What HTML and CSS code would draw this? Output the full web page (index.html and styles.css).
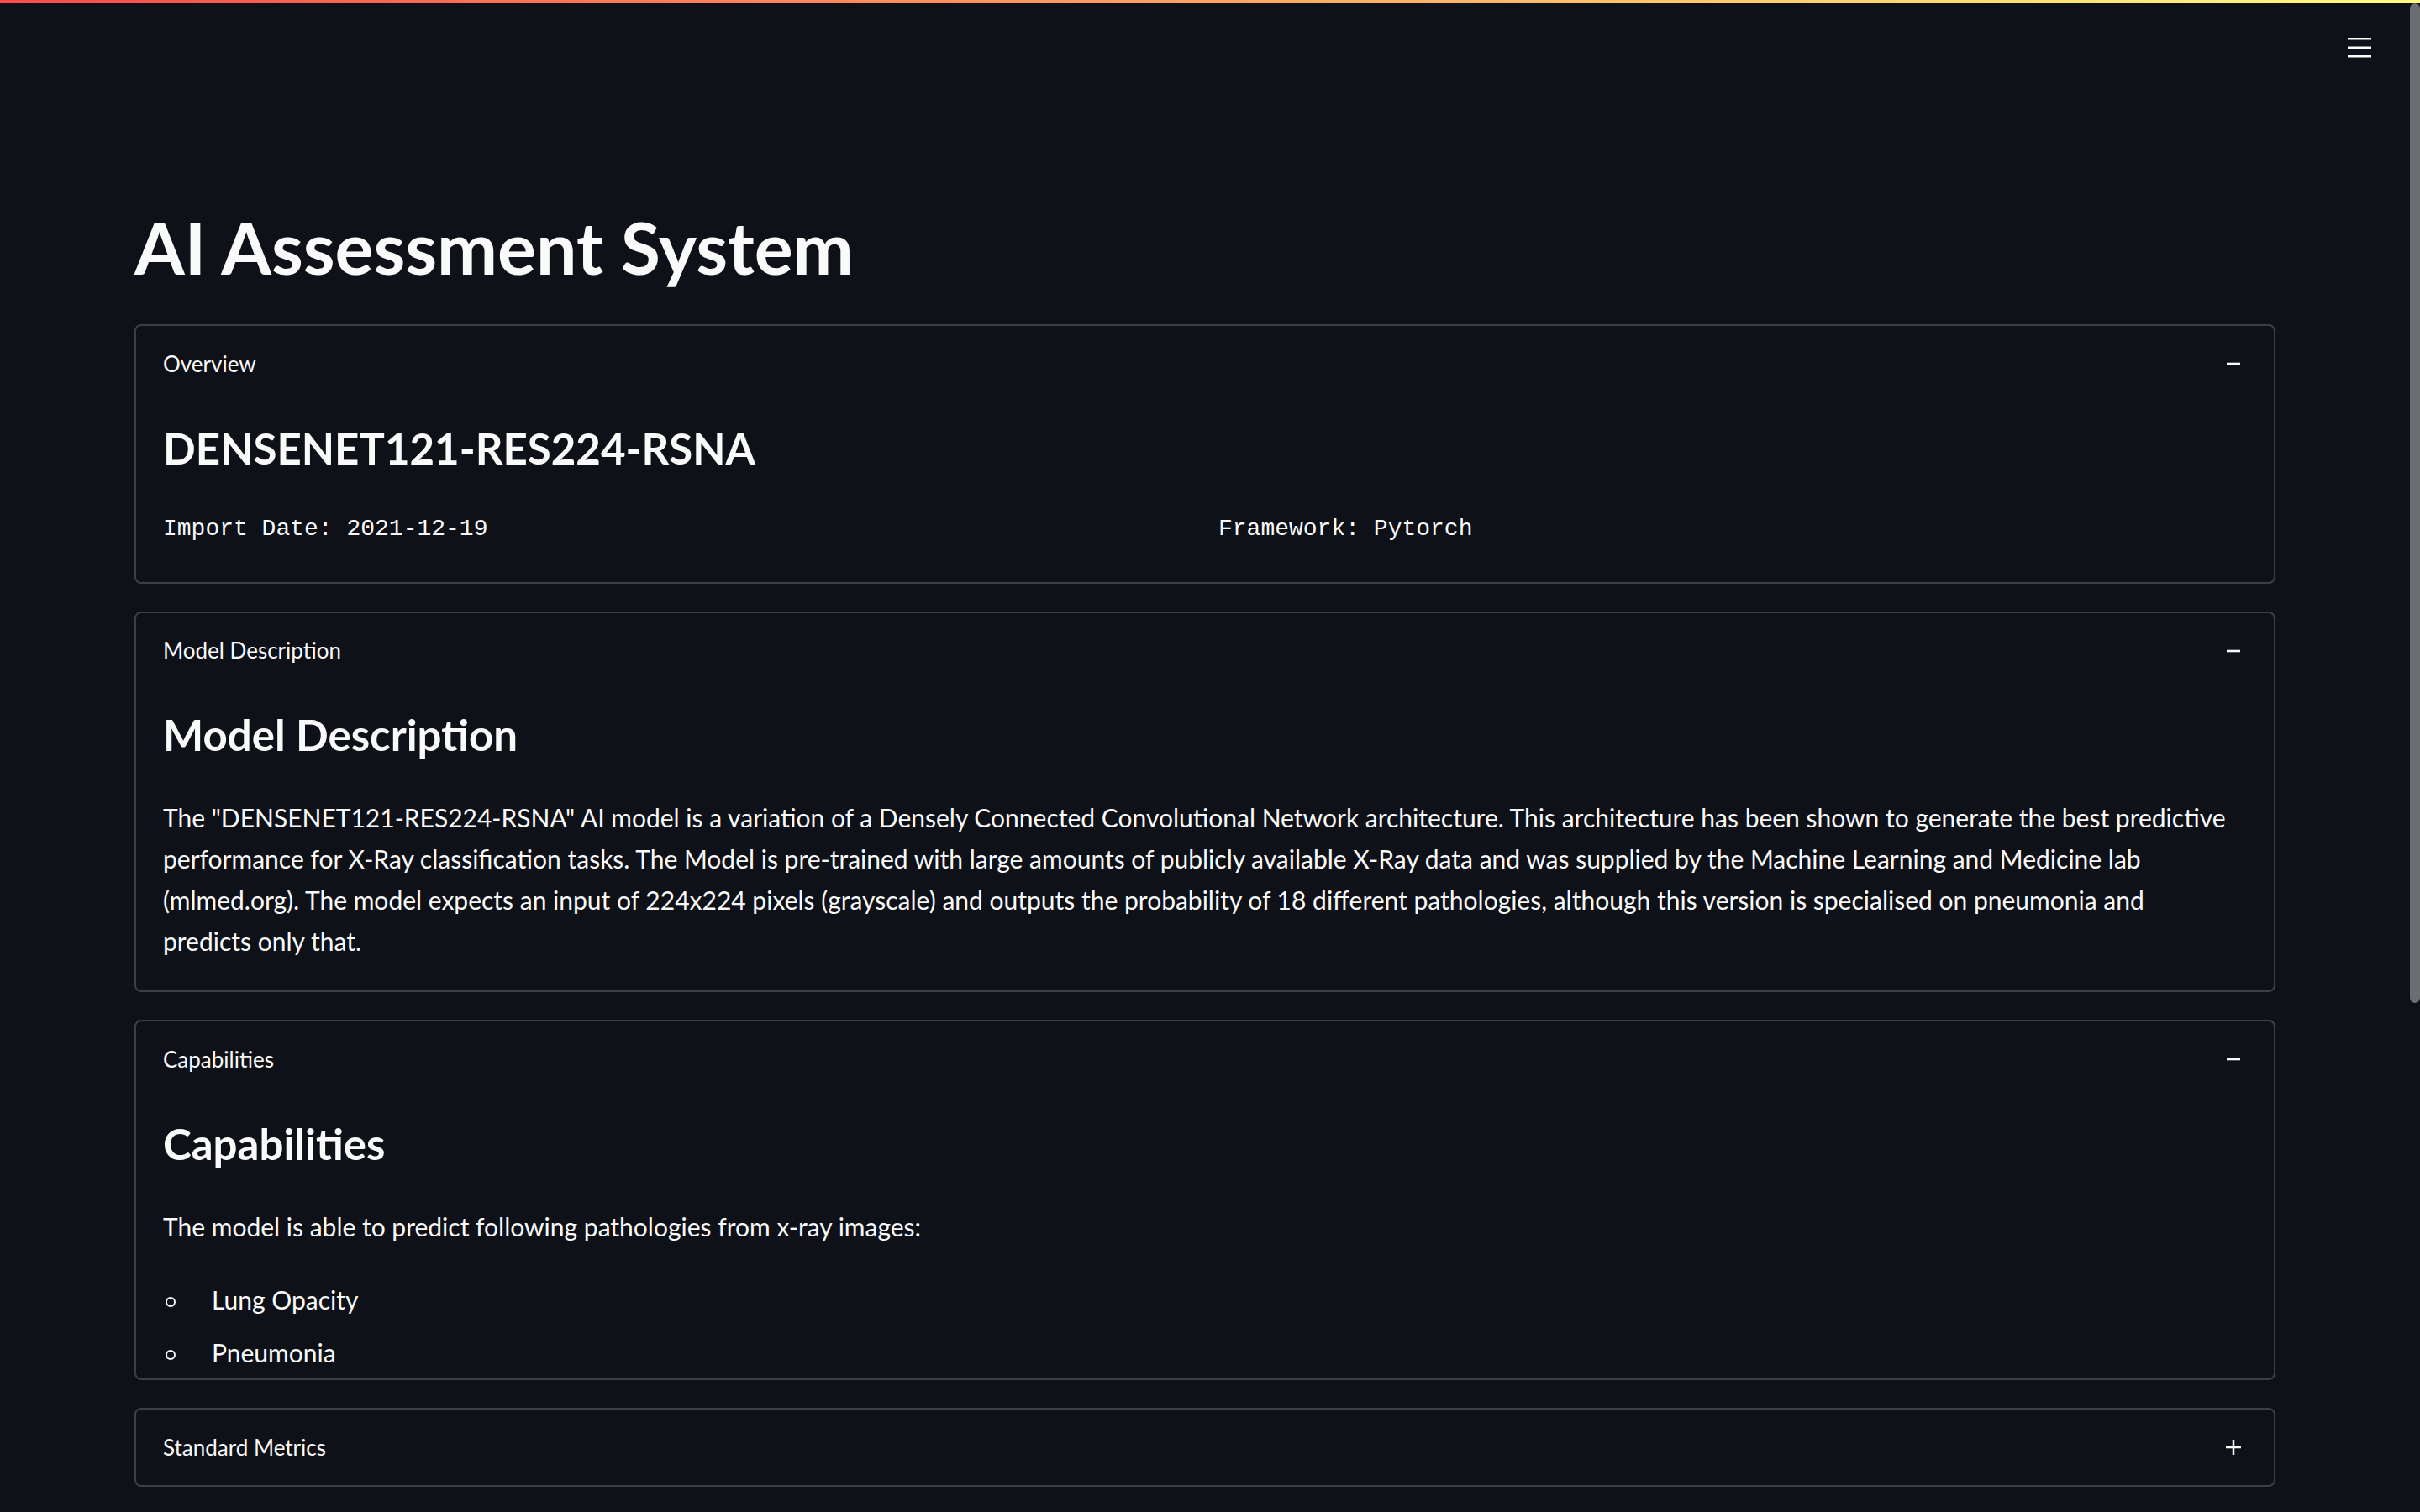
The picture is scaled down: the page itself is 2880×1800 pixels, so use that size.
FILE: index.html
```html
<!DOCTYPE html>
<html lang="en">
<head>
<meta charset="utf-8">
<title>AI Assessment System</title>
<link rel="stylesheet" href="styles.css">
</head>
<body>
<div class="decoration"></div>
<header class="topbar">
  <button class="menu-btn" aria-label="Menu">
    <svg width="28" height="26" viewBox="0 0 28 26"><rect x="0" y="2" width="28" height="2.5" fill="#fafafa"/><rect x="0" y="12.5" width="28" height="2.5" fill="#fafafa"/><rect x="0" y="23" width="28" height="2.5" fill="#fafafa"/></svg>
  </button>
</header>
<div class="app">
  <main class="main">
    <h1 class="title">AI Assessment System</h1>
    <div class="stack">
      <section class="expander">
        <div class="exp-head"><span>Overview</span>
          <svg class="icon" viewBox="0 0 24 24" width="24" height="24"><rect x="4" y="10.7" width="16" height="2.6" fill="#fafafa"/></svg>
        </div>
        <div class="exp-body overview">
          <h3 class="h3">DENSENET121-RES224-RSNA</h3>
          <div class="cols">
            <div class="mono">Import Date: 2021-12-19</div>
            <div class="mono">Framework: Pytorch</div>
          </div>
        </div>
      </section>
      <section class="expander">
        <div class="exp-head"><span>Model Description</span>
          <svg class="icon" viewBox="0 0 24 24" width="24" height="24"><rect x="4" y="10.7" width="16" height="2.6" fill="#fafafa"/></svg>
        </div>
        <div class="exp-body description">
          <h3 class="h3">Model Description</h3>
          <p class="para desc-para">The "DENSENET121-RES224-RSNA" AI model is a variation of a Densely Connected Convolutional Network architecture. This architecture has been shown to generate the best predictive performance for X-Ray classification tasks. The Model is pre-trained with large amounts of publicly available X-Ray data and was supplied by the Machine Learning and Medicine lab (mlmed.org). The model expects an input of 224x224 pixels (grayscale) and outputs the probability of 18 different pathologies, although this version is specialised on pneumonia and predicts only that.</p>
        </div>
      </section>
      <section class="expander">
        <div class="exp-head"><span>Capabilities</span>
          <svg class="icon" viewBox="0 0 24 24" width="24" height="24"><rect x="4" y="10.7" width="16" height="2.6" fill="#fafafa"/></svg>
        </div>
        <div class="exp-body capabilities">
          <h3 class="h3">Capabilities</h3>
          <p class="para cap-para">The model is able to predict following pathologies from x-ray images:</p>
          <ul class="list">
            <li>Lung Opacity</li>
            <li>Pneumonia</li>
          </ul>
        </div>
      </section>
      <section class="expander">
        <div class="exp-head"><span>Standard Metrics</span>
          <svg class="icon" viewBox="0 0 24 24" width="24" height="24"><rect x="3" y="10.75" width="18" height="2.5" fill="#fafafa"/><rect x="10.75" y="3" width="2.5" height="18" fill="#fafafa"/></svg>
        </div>
      </section>
    </div>
  </main>
  <div class="scroll-track"><div class="scroll-thumb"></div></div>
</div>
</body>
</html>
```
FILE: styles.css
```css
html, body {
  margin: 0;
  padding: 0;
  height: 100%;
  overflow: hidden;
  background: #0e1117;
  color: #fafafa;
  font-family: Lato, "Noto Sans", sans-serif;
}

.decoration {
  position: fixed;
  top: 0;
  left: 0;
  right: 0;
  height: 4px;
  background: linear-gradient(90deg, rgb(255, 75, 75), rgb(255, 253, 128));
  z-index: 10;
}

.topbar {
  position: fixed;
  top: 4px;
  left: 0;
  right: 12px;
  height: 104px;
  display: flex;
  align-items: center;
  justify-content: flex-end;
  padding-right: 46px;
  z-index: 5;
}

.menu-btn {
  background: none;
  border: 0;
  padding: 0;
  margin: 0;
  display: flex;
  cursor: pointer;
}

.app {
  display: flex;
  height: 100%;
}

.main {
  flex: 1;
  padding: 242px 160px 0;
  min-width: 0;
}

.title {
  margin: 0 0 41px;
  font-weight: 700;
  font-size: 86px;
  line-height: 1.2;
}

.stack {
  display: flex;
  flex-direction: column;
  gap: 33px;
}

.expander {
  border: 2px solid rgba(250, 250, 250, 0.2);
  border-radius: 8px;
}

.exp-head {
  height: 90px;
  display: flex;
  align-items: center;
  justify-content: space-between;
  padding: 0 36px 0 32px;
  font-size: 26px;
  line-height: 1.2;
}

.icon {
  display: block;
  flex: none;
}

.exp-body {
  padding: 0 32px 40px;
}

.h3 {
  margin: 24.5px 0 0;
  font-weight: 700;
  font-size: 51px;
  line-height: 1.2;
}

.cols {
  display: grid;
  grid-template-columns: 1fr 1fr;
  gap: 32px;
  margin-top: 44.3px;
}

.mono {
  font-family: "Liberation Mono", "DejaVu Sans Mono", monospace;
  font-size: 28px;
  line-height: 44.8px;
}

.para {
  margin: 43.5px 0 0;
  font-size: 30px;
  line-height: 49px;
}

.desc-para {
  max-width: 2462px;
}

.description {
  padding-bottom: 34px;
}

.capabilities {
  padding-bottom: 6px;
}

.cap-para {
  margin-top: 44.5px;
}

.list {
  list-style: none;
  margin: 38px 0 0;
  padding: 0;
  font-size: 30px;
  line-height: 49px;
}

.list li {
  display: flex;
  align-items: center;
  margin-bottom: 14px;
}

.list li:last-child {
  margin-bottom: 0;
}

.list li::before {
  content: "";
  flex: none;
  width: 8px;
  height: 8px;
  border: 2px solid #fafafa;
  border-radius: 50%;
  margin: 4px 43px 0 3px;
}

.scroll-track {
  width: 12px;
  flex: none;
}

.scroll-thumb {
  margin-top: 4px;
  height: 1190px;
  background: #6c6d71;
  border-radius: 6px;
}
```
